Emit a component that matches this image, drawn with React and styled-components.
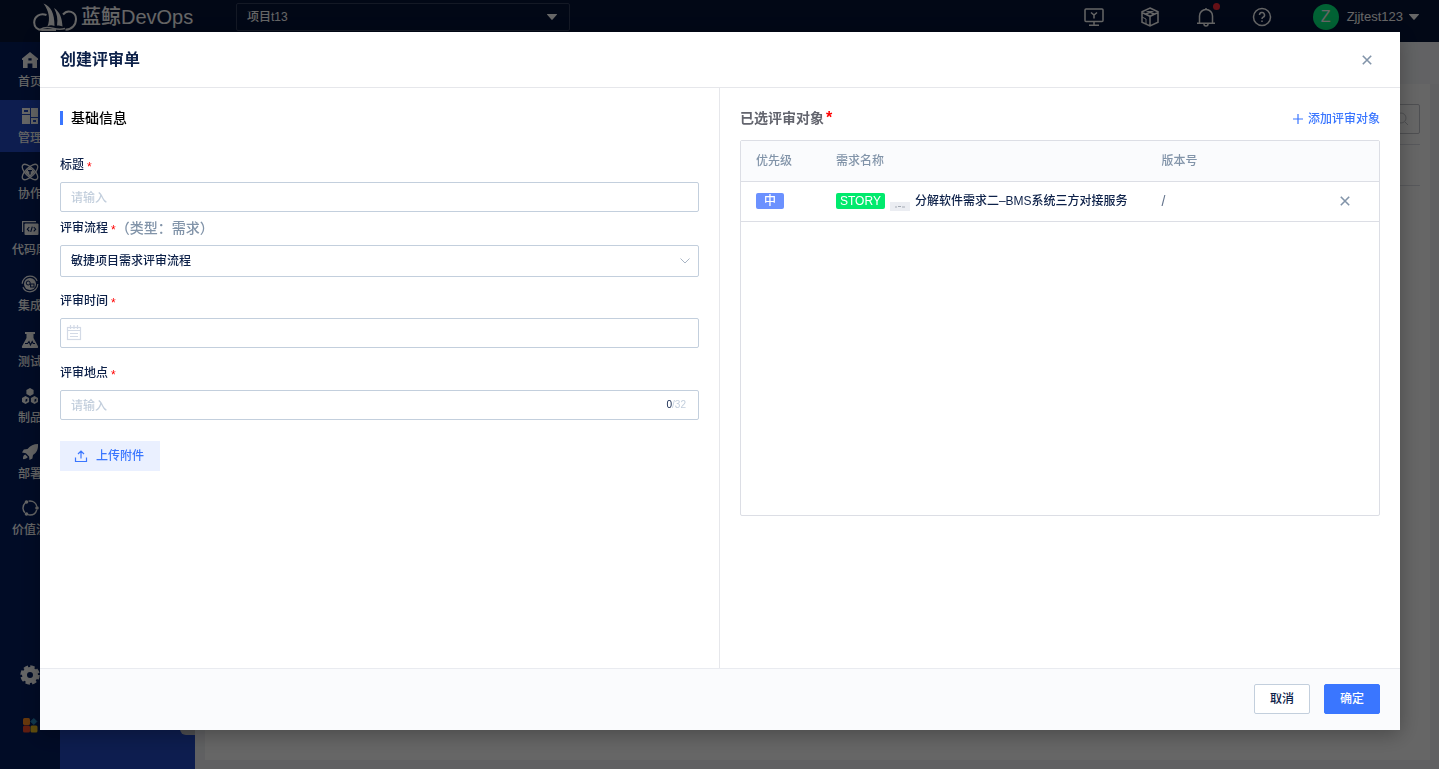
import React from 'react';
import styled, { createGlobalStyle } from 'styled-components';

const menuItems = [
  { label: '首页', icon: 'home' },
  { label: '管理', icon: 'board', active: true },
  { label: '协作', icon: 'atom' },
  { label: '代码库', icon: 'code' },
  { label: '集成', icon: 'build' },
  { label: '测试', icon: 'flask' },
  { label: '制品', icon: 'cubes' },
  { label: '部署', icon: 'rocket' },
  { label: '价值流', icon: 'stream' },
];

const reviewItems = [
  {
    id: 1,
    priority: '中',
    type: 'STORY',
    name: '分解软件需求二–BMS系统三方对接服务',
    version: '/',
  },
];

const menuIcons = {
  home: (
    <path
      fill="currentColor"
      fillRule="evenodd"
      d="M9 1 17 7.6V9h-1v8h-4.6v-4.5H6.6V17H2V9H1V7.6zM7.4 7.2v2.4h3.2V7.2z"
    />
  ),
  board: (
    <path
      fill="currentColor"
      fillRule="evenodd"
      d="M1 1h8v6H1zm2 2v2h4V3zM10 1h7v9h-7zM1 8h8v9H1zm9 3h7v6h-7zm2 2v2h3v-2z"
    />
  ),
  atom: (
    <>
      <g fill="none" stroke="currentColor" strokeWidth="1.3">
        <ellipse cx="9" cy="9" rx="10" ry="4.4" transform="rotate(45 9 9)" />
        <ellipse cx="9" cy="9" rx="10" ry="4.4" transform="rotate(-45 9 9)" />
      </g>
      <path fill="currentColor" d="m9 3.8 5.2 5.2L9 14.2 3.8 9z" />
      <path stroke="#031e60" strokeWidth="1.4" d="M7 7.6h4M9 7.6v4" />
    </>
  ),
  code: (
    <>
      <path fill="none" stroke="currentColor" strokeWidth="1.2" d="M1.6 13V2.6H15" />
      <rect x="3.5" y="4.5" width="14" height="11.5" rx="1" fill="currentColor" />
      <path
        fill="none"
        stroke="#031e60"
        strokeWidth="1.1"
        d="m8.3 8-2 2.2 2 2.2m4.4-4.4 2 2.2-2 2.2m-1.4-4.8-1.6 5.2"
      />
    </>
  ),
  build: (
    <>
      <circle
        cx="9"
        cy="9"
        r="7.8"
        fill="none"
        stroke="currentColor"
        strokeWidth="1.2"
        strokeDasharray="21 3.5"
      />
      <circle cx="9" cy="9" r="6" fill="currentColor" />
      <g fill="none" stroke="#031e60" strokeWidth="1">
        <circle cx="7.2" cy="8" r="2" />
        <rect x="9.6" y="9" width="3.4" height="3" />
      </g>
    </>
  ),
  flask: (
    <>
      <path
        fill="currentColor"
        d="M4 1h10v2h-1.5v4l4.5 8.2c.4.9 0 1.8-1 1.8H2c-1 0-1.4-.9-1-1.8L5.5 7V3H4z"
      />
      <path
        fill="none"
        stroke="#031e60"
        strokeWidth="1.1"
        d="M4 12.5h2.5L8 10.5l1.5 3.5 1.7-3.5 1 2H14"
      />
    </>
  ),
  cubes: (
    <>
      <path fill="currentColor" d="m9 1 3.6 2v4L9 9 5.4 7V3z" />
      <path
        fill="currentColor"
        fillRule="evenodd"
        d="m4.5 9 3.6 2v4l-3.6 2L1 15v-4zm0 3.5V15l1.8-1v-2.5zm9-3.5 3.5 2v4l-3.5 2-3.6-2v-4zm0 3.5V15l1.8-1v-2.500z"
      />
    </>
  ),
  rocket: (
    <path
      fill="currentColor"
      d="M17 1c.3 5-1 8.5-5 11l-.6 3.5L8.5 17l-.4-3.6-3.2-3.2L1 9.600l1.800-3L6.500 6C9.500 2.500 12.500 1 17 1M4.200 11.500l2.600 2.600c-1 1.600-3 2.200-4.800 2 .2-1-.4-3.400 2.200-4.600"
    />
  ),
  stream: (
    <>
      <circle
        cx="9"
        cy="9"
        r="7"
        fill="none"
        stroke="currentColor"
        strokeWidth="1.4"
        strokeDasharray="11 3.66"
        strokeDashoffset="-2"
      />
      <circle cx="16" cy="9" r="1.8" fill="currentColor" />
      <circle cx="5.5" cy="3" r="1.8" fill="currentColor" />
      <circle cx="5.5" cy="15" r="1.8" fill="currentColor" />
    </>
  ),
};

const lineIcon = { fill: 'none', stroke: 'currentColor', strokeWidth: 1.5 };

const CloseIcon = () => (
  <svg width="10" height="10" viewBox="0 0 10 10" fill="none" stroke="currentColor">
    <path d="m.8.8 8.400 8.400M9.200.8.8 9.200" strokeWidth="1.6" />
  </svg>
);

const Caret = () => (
  <svg width="10" height="6" viewBox="0 0 10 6">
    <path fill="currentColor" d="M.5 0h9c.5 0 .6.4.3.8L5.600 5.600a.8.8 0 0 1-1.200 0L.2.800C-.1.400 0 0 .5 0" />
  </svg>
);

const LogoIcon = () => (
  <svg width="46" height="30" viewBox="0 0 46 30" fill="none">
    <path
      d="M13.500 13C7 10.500 1.200 14.500 1.200 20.500c0 4.500 3.300 7.500 8 7.500H23"
      stroke="currentColor"
      strokeWidth="2"
    />
    <path
      d="M30 12.500c4.500-5.500 13-3 13 4.500 0 6-4 10.500-10.500 10.800"
      stroke="currentColor"
      strokeWidth="2"
    />
    <path
      fill="currentColor"
      d="M10.500 1.500C18 4.500 21.500 11 21.500 24c-2.500-.8-4.500-1-7 .2C17.500 17 16 9 10.500 1.500"
    />
    <path fill="currentColor" d="M21 6c6 4 8 10 8.500 18.500-2-.8-3.500-1-5.500-1 1-6.500 0-12-3-17.500" />
    <path
      d="M7 27.500c4.500-3 8.500-2.500 13-1.300 4.500 1.300 8.500 1.300 12 .3"
      stroke="currentColor"
      strokeWidth="1.500"
    />
  </svg>
);

const HeaderTools = () => (
  <Tools>
    <ToolButton aria-label="监控">
      <svg width="20" height="20" viewBox="0 0 20 20" {...lineIcon}>
        <rect x="1" y="2" width="18" height="12.5" rx="1" />
        <path d="M10 14.500V18M5 18.300h10M7 5.500l3 2.500 3-2.500M10 8v3.500" />
      </svg>
    </ToolButton>
    <ToolButton aria-label="制品">
      <svg width="20" height="20" viewBox="0 0 20 20" {...lineIcon}>
        <path d="m10 1 8 3.800v10.400L10 19l-8-3.800V4.800zM2 5.500l8 3.800 8-3.800M10 9.300V19M6 3.200l8 3.800M14 3.200 6 7" />
        <path d="m2 10 4 2v5" strokeWidth="1" />
      </svg>
    </ToolButton>
    <ToolButton aria-label="消息">
      <svg width="20" height="20" viewBox="0 0 20 20" {...lineIcon}>
        <path d="M3.500 16V9a6.500 6.500 0 0 1 13 0v7M1 16.200h18M8 17a2 2 0 0 0 4 0M10 2.500V1" />
      </svg>
      <Dot />
    </ToolButton>
    <ToolButton aria-label="帮助">
      <svg width="20" height="20" viewBox="0 0 20 20" {...lineIcon}>
        <circle cx="10" cy="10" r="8.5" />
        <path d="M7.500 8a2.500 2.500 0 1 1 3.700 2.200c-.8.500-1.200.9-1.200 1.800M10 13.500V15" />
      </svg>
    </ToolButton>
    <User type="button">
      <Avatar>Z</Avatar>
      Zjjtest123
      <Caret />
    </User>
  </Tools>
);

const SideMenu = () => (
  <Sidebar>
    <Menu>
      {menuItems.map(({ label, icon, active }) => (
        <MenuLink key={label} href="#" $active={active}>
          <svg width="18" height="18" viewBox="0 0 18 18">
            {menuIcons[icon]}
          </svg>
          {label}
        </MenuLink>
      ))}
    </Menu>
    <MenuFooter>
      <a href="#" aria-label="设置">
        <svg width="20" height="20" viewBox="0 0 20 20">
          <circle cx="10" cy="10" r="5.5" fill="none" stroke="currentColor" strokeWidth="5" />
          <circle
            cx="10"
            cy="10"
            r="8.4"
            fill="none"
            stroke="currentColor"
            strokeWidth="2.6"
            strokeDasharray="4.4 2.2"
          />
        </svg>
      </a>
      <a href="#" aria-label="应用">
        <svg width="16" height="16" viewBox="0 0 16 16">
          <rect x="1" y="1" width="7" height="7" rx="1.5" fill="#ff8c1f" />
          <path
            d="m11.800 1.500 3 3-3 3-3-3z"
            fill="#2b8fc4"
            stroke="#2b8fc4"
            strokeLinejoin="round"
          />
          <rect x="1" y="8.5" width="7" height="7" rx="1.5" fill="#f04a2a" />
          <rect x="8.5" y="8.5" width="7" height="7" rx="1.5" fill="#f0c020" />
        </svg>
      </a>
    </MenuFooter>
  </Sidebar>
);

const ReviewForm = () => (
  <FormPane>
    <SectionTitle>基础信息</SectionTitle>
    <Field $gap="5px">
      <Label htmlFor="title">
        标题<Star>*</Star>
      </Label>
      <Input id="title" placeholder="请输入" />
    </Field>
    <Field $gap="13px">
      <Label htmlFor="flow">
        评审流程<Star>*</Star>
        <Hint>（类型：需求）</Hint>
      </Label>
      <Control>
        <Select id="flow">
          <option>敏捷项目需求评审流程</option>
        </Select>
        <SelectArrow width="10" height="6" viewBox="0 0 10 6">
          <path d="m.5.5 4.500 4.500L9.500.5" fill="none" stroke="currentColor" />
        </SelectArrow>
      </Control>
    </Field>
    <Field $gap="14px">
      <Label htmlFor="time">
        评审时间<Star>*</Star>
      </Label>
      <Control>
        <Input id="time" />
        <DateIcon width="16" height="16" viewBox="0 0 16 16" fill="none" stroke="currentColor">
          <rect x="1.5" y="2.5" width="13" height="12" strokeWidth="1.2" />
          <path d="M4.500 0v4M8 0v4M11.500 0v4M1.500 5.500h13M4 8.500h8M4 11.500h8" strokeWidth="1.2" />
        </DateIcon>
      </Control>
    </Field>
    <Field $gap="14px">
      <Label htmlFor="place">
        评审地点<Star>*</Star>
      </Label>
      <Control>
        <Input id="place" placeholder="请输入" />
        <Counter>
          <b>0</b>/32
        </Counter>
      </Control>
    </Field>
    <UploadButton type="button">
      <svg width="14" height="14" viewBox="0 0 14 14" fill="none" stroke="currentColor">
        <path d="M1.500 8.500V12.500h11V8.500M7 9.500V2M4 5l3-3 3 3" strokeWidth="1.2" />
      </svg>
      上传附件
    </UploadButton>
  </FormPane>
);

const ReviewTargets = () => (
  <TargetPane>
    <TargetHeader>
      <TargetTitle>
        已选评审对象<TitleStar>*</TitleStar>
      </TargetTitle>
      <AddButton type="button">
        <svg width="10" height="10" viewBox="0 0 10 10" fill="none" stroke="currentColor">
          <path d="M5 0v10M0 5h10" strokeWidth="1.2" />
        </svg>
        添加评审对象
      </AddButton>
    </TargetHeader>
    <TableBox>
      <Table>
        <colgroup>
          <Col $width="80px" />
          <Col />
          <Col $width="28%" />
          <Col $width="54px" />
        </colgroup>
        <thead>
          <tr>
            <th>优先级</th>
            <th>需求名称</th>
            <th>版本号</th>
            <th />
          </tr>
        </thead>
        <tbody>
          {reviewItems.map(({ id, priority, type, name, version }) => (
            <tr key={id}>
              <td>
                <Priority>{priority}</Priority>
              </td>
              <td>
                <StoryCell>
                  <StoryType>{type}</StoryType>
                  <MiniTag>
                    <svg width="10" height="3" viewBox="0 0 10 3">
                      <path d="M0 2h2M3 1.500h3M7 2h3" stroke="#a5abb5" />
                    </svg>
                  </MiniTag>
                  {name}
                </StoryCell>
              </td>
              <VersionCell>{version}</VersionCell>
              <td>
                <IconButton type="button" aria-label="移除">
                  <CloseIcon />
                </IconButton>
              </td>
            </tr>
          ))}
        </tbody>
      </Table>
    </TableBox>
  </TargetPane>
);

const App = () => (
  <>
    <GlobalStyle />
    <Page>
      <Header>
        <Logo href="#">
          <LogoIcon />
          蓝鲸DevOps
        </Logo>
        <ProjectButton type="button">
          项目t13
          <Caret />
        </ProjectButton>
        <HeaderTools />
      </Header>
      <Main>
        <SideMenu />
        <SubMenu>
          <Collapse type="button" aria-label="收起" />
        </SubMenu>
        <Content>
          <TopStrip />
          <Card>
            <SearchBox>
              <svg width="14" height="14" viewBox="0 0 14 14" fill="none" stroke="currentColor">
                <circle cx="6" cy="6" r="5" />
                <path d="m10 10 3 3" />
              </svg>
            </SearchBox>
            <ListHead />
          </Card>
        </Content>
      </Main>
    </Page>
    <Overlay>
      <Modal role="dialog" aria-labelledby="dialog-title">
        <ModalHeader>
          <ModalTitle id="dialog-title">创建评审单</ModalTitle>
          <IconButton type="button" aria-label="关闭">
            <CloseIcon />
          </IconButton>
        </ModalHeader>
        <ModalBody>
          <ReviewForm />
          <ReviewTargets />
        </ModalBody>
        <ModalFooter>
          <Button type="button">取消</Button>
          <Button type="button" $primary>
            确定
          </Button>
        </ModalFooter>
      </Modal>
    </Overlay>
  </>
);

export default App;

const GlobalStyle = createGlobalStyle`
  * {
    box-sizing: border-box;
  }

  body {
    margin: 0;
    color: #0d2149;
    font-family: "Liberation Sans", "Noto Sans CJK SC", sans-serif;
    font-size: 12px;
    font-weight: 500;
    line-height: 20px;
  }

  button, input, select {
    font: inherit;
    color: inherit;
  }

  button {
    padding: 0;
    border: 0;
    background: none;
    cursor: pointer;
  }

  a {
    color: inherit;
    text-decoration: none;
  }

  svg {
    flex-shrink: 0;
  }
`;

const Page = styled.div`
  display: flex;
  flex-direction: column;
  height: 100vh;
  overflow: hidden;
  background: #f0f1f5;
`;

const Header = styled.header`
  display: flex;
  align-items: center;
  height: 42px;
  padding: 0 20px 8px 33px;
  background: #051439;
  color: #ffffff;
`;

const Logo = styled.a`
  display: flex;
  align-items: center;
  gap: 2px;
  width: 203px;
  font-size: 20px;
  white-space: nowrap;
`;

const ProjectButton = styled.button`
  display: flex;
  align-items: center;
  justify-content: space-between;
  width: 334px;
  height: 28px;
  padding: 0 12px 0 10px;
  border: 1px solid #333f5e;
  border-radius: 2px;
`;

const Tools = styled.div`
  display: flex;
  align-items: center;
  gap: 36px;
  margin-left: auto;
`;

const ToolButton = styled.button`
  position: relative;
  display: flex;
`;

const Dot = styled.span`
  position: absolute;
  top: -4px;
  right: -4px;
  width: 7px;
  height: 7px;
  border-radius: 50%;
  background: #ff2a38;
`;

const User = styled.button`
  display: flex;
  align-items: center;
  gap: 6px;
  margin-left: 5px;
  font-size: 13px;
`;

const Avatar = styled.span`
  width: 26px;
  margin-right: 2px;
  border-radius: 50%;
  background: #04f582;
  font-size: 16px;
  line-height: 26px;
`;

const Main = styled.div`
  display: flex;
  flex: 1;
  min-height: 0;
`;

const Sidebar = styled.nav`
  display: flex;
  flex-direction: column;
  justify-content: space-between;
  width: 60px;
  background: #031e60;
  color: #ffffff;
`;

const Menu = styled.div`
  display: flex;
  flex-direction: column;
  gap: 4px;
  padding-top: 2px;
`;

const MenuLink = styled.a`
  display: flex;
  flex-direction: column;
  align-items: center;
  justify-content: center;
  gap: 5px;
  height: 52px;
  padding-top: 1px;
  line-height: 16px;
  background: ${props => (props.$active ? '#2149c5' : 'transparent')};
`;

const MenuFooter = styled.div`
  display: flex;
  flex-direction: column;
  align-items: center;
  gap: 32px;
  padding-bottom: 36px;

  a {
    display: flex;
  }
`;

const SubMenu = styled.aside`
  display: flex;
  align-items: flex-end;
  justify-content: flex-end;
  width: 135px;
  padding-bottom: 34px;
  background: #2149c5;
`;

const Collapse = styled.button`
  width: 15px;
  height: 30px;
  border-radius: 6px 0 0 6px;
  background: #c4c6cc;
`;

const Content = styled.main`
  display: flex;
  flex: 1;
  flex-direction: column;
`;

const TopStrip = styled.div`
  height: 42px;
  background: #f5f6fa;
`;

const Card = styled.section`
  flex: 1;
  margin: 0 9px 9px 10px;
  padding: 20px 10px;
  background: #ffffff;
`;

const SearchBox = styled.div`
  display: flex;
  align-items: center;
  justify-content: flex-end;
  width: 300px;
  height: 30px;
  margin: 0 0 10px auto;
  padding-right: 10px;
  border: 1px solid #c4c6cc;
  border-radius: 2px;
  color: #c4c6cc;
`;

const ListHead = styled.div`
  height: 42px;
  border: 1px solid #dcdee5;
  border-width: 1px 0;
`;

const Overlay = styled.div`
  position: fixed;
  inset: 0;
  display: flex;
  padding: 32px 39px 39px 40px;
  background: rgba(0, 0, 0, 0.6);
`;

const Modal = styled.div`
  display: flex;
  flex: 1;
  flex-direction: column;
  background: #ffffff;
  box-shadow: 0 4px 20px rgba(0, 0, 0, 0.3);
`;

const ModalHeader = styled.header`
  display: flex;
  align-items: center;
  justify-content: space-between;
  height: 56px;
  padding: 0 28px 0 20px;
  border-bottom: 1px solid #e6e7eb;
`;

const ModalTitle = styled.h1`
  margin: 0;
  font-size: 16px;
  font-weight: 700;
  line-height: 24px;
`;

const ModalBody = styled.div`
  display: grid;
  grid-template-columns: 1fr 1fr;
  flex: 1;
`;

const ModalFooter = styled.footer`
  display: flex;
  align-items: center;
  justify-content: flex-end;
  gap: 14px;
  height: 62px;
  padding: 0 20px 2px;
  border-top: 1px solid #e9ebf0;
  background: #fafbfd;
`;

const FormPane = styled.form`
  padding: 20px;
  border-right: 1px solid #e6e7eb;
`;

const SectionTitle = styled.h2`
  display: flex;
  align-items: center;
  gap: 8px;
  margin: 0 0 26px;
  color: #000000;
  font-size: 14px;
  font-weight: 500;

  &::before {
    content: '';
    width: 3px;
    height: 14px;
    background: #3a76ff;
  }
`;

const Field = styled.div`
  display: flex;
  flex-direction: column;
  gap: 6px;
  margin-bottom: ${props => props.$gap};
`;

const Label = styled.label`
  display: flex;
  align-items: center;
  height: 22px;
`;

const Star = styled.span`
  padding-top: 3px;
  margin-left: 3px;
  color: #ff0000;
`;

const TitleStar = styled.span`
  margin-left: 2px;
  color: #ff0000;
  font-size: 16px;
`;

const Hint = styled.span`
  color: #8294a9;
  font-size: 14px;
`;

const Control = styled.div`
  position: relative;
`;

const Input = styled.input`
  display: block;
  width: 100%;
  height: 30px;
  padding: 2px 10px 0;
  border: 1px solid #c3cfdd;
  border-radius: 2px;
  background: #ffffff;

  &::placeholder {
    color: #c3cfdd;
  }
`;

const Select = styled.select`
  display: block;
  width: 100%;
  height: 32px;
  padding: 0 30px 0 10px;
  border: 1px solid #c3cfdd;
  border-radius: 2px;
  background: #ffffff;
  appearance: none;
`;

const SelectArrow = styled.svg`
  position: absolute;
  top: 13px;
  right: 9px;
  color: #a9b5c5;
`;

const DateIcon = styled.svg`
  position: absolute;
  top: 7px;
  left: 6px;
  color: #d3dae6;
`;

const Counter = styled.span`
  position: absolute;
  top: 5px;
  right: 13px;
  color: #c3cfdd;
  font-size: 10px;

  b {
    color: #0d2149;
    font-weight: 500;
  }
`;

const UploadButton = styled.button`
  display: flex;
  align-items: center;
  gap: 8px;
  height: 30px;
  margin-top: 21px;
  padding: 0 16px 0 14px;
  background: #eaf0ff;
  color: #3a76ff;
`;

const TargetPane = styled.section`
  padding: 20px;
`;

const TargetHeader = styled.div`
  display: flex;
  align-items: center;
  justify-content: space-between;
  height: 20px;
  margin-bottom: 12px;
`;

const TargetTitle = styled.h2`
  display: flex;
  margin: 0;
  color: #63656e;
  font-size: 14px;
  font-weight: 700;
`;

const AddButton = styled.button`
  display: flex;
  align-items: center;
  gap: 5px;
  padding-top: 2px;
  color: #3a76ff;
`;

const TableBox = styled.div`
  height: 376px;
  border: 1px solid #dcdee5;
  border-radius: 2px;
`;

const Table = styled.table`
  width: 100%;
  border-collapse: collapse;
  table-layout: fixed;

  th,
  td {
    height: 40px;
    padding: 0 15px;
    border-bottom: 1px solid #dcdee5;
    text-align: left;
  }

  th {
    background: #fafbfd;
    color: #8294a9;
    font-weight: 500;
  }
`;

const Col = styled.col`
  width: ${props => props.$width || 'auto'};
`;

const VersionCell = styled.td`
  color: #63738c;
  font-size: 14px;
`;

const Priority = styled.span`
  display: block;
  width: 28px;
  border-radius: 2px;
  background: #6b91ff;
  color: #ffffff;
  line-height: 16px;
  text-align: center;
`;

const StoryCell = styled.div`
  display: flex;
  align-items: center;
  gap: 5px;
  white-space: nowrap;
`;

const StoryType = styled.span`
  padding: 0 4px;
  border-radius: 2px;
  background: #00ea6d;
  color: #ffffff;
  line-height: 16px;
`;

const MiniTag = styled.span`
  display: flex;
  align-items: center;
  align-self: flex-end;
  justify-content: center;
  width: 20px;
  height: 9px;
  background: #ebedf2;
`;

const IconButton = styled.button`
  display: flex;
  color: #8294a9;
`;

const Button = styled.button`
  width: 56px;
  height: 30px;
  border: 1px solid ${props => (props.$primary ? '#3a76ff' : '#c3cfdd')};
  border-radius: 2px;
  background: ${props => (props.$primary ? '#3a76ff' : '#ffffff')};
  color: ${props => (props.$primary ? '#ffffff' : '#0d2149')};
`;
